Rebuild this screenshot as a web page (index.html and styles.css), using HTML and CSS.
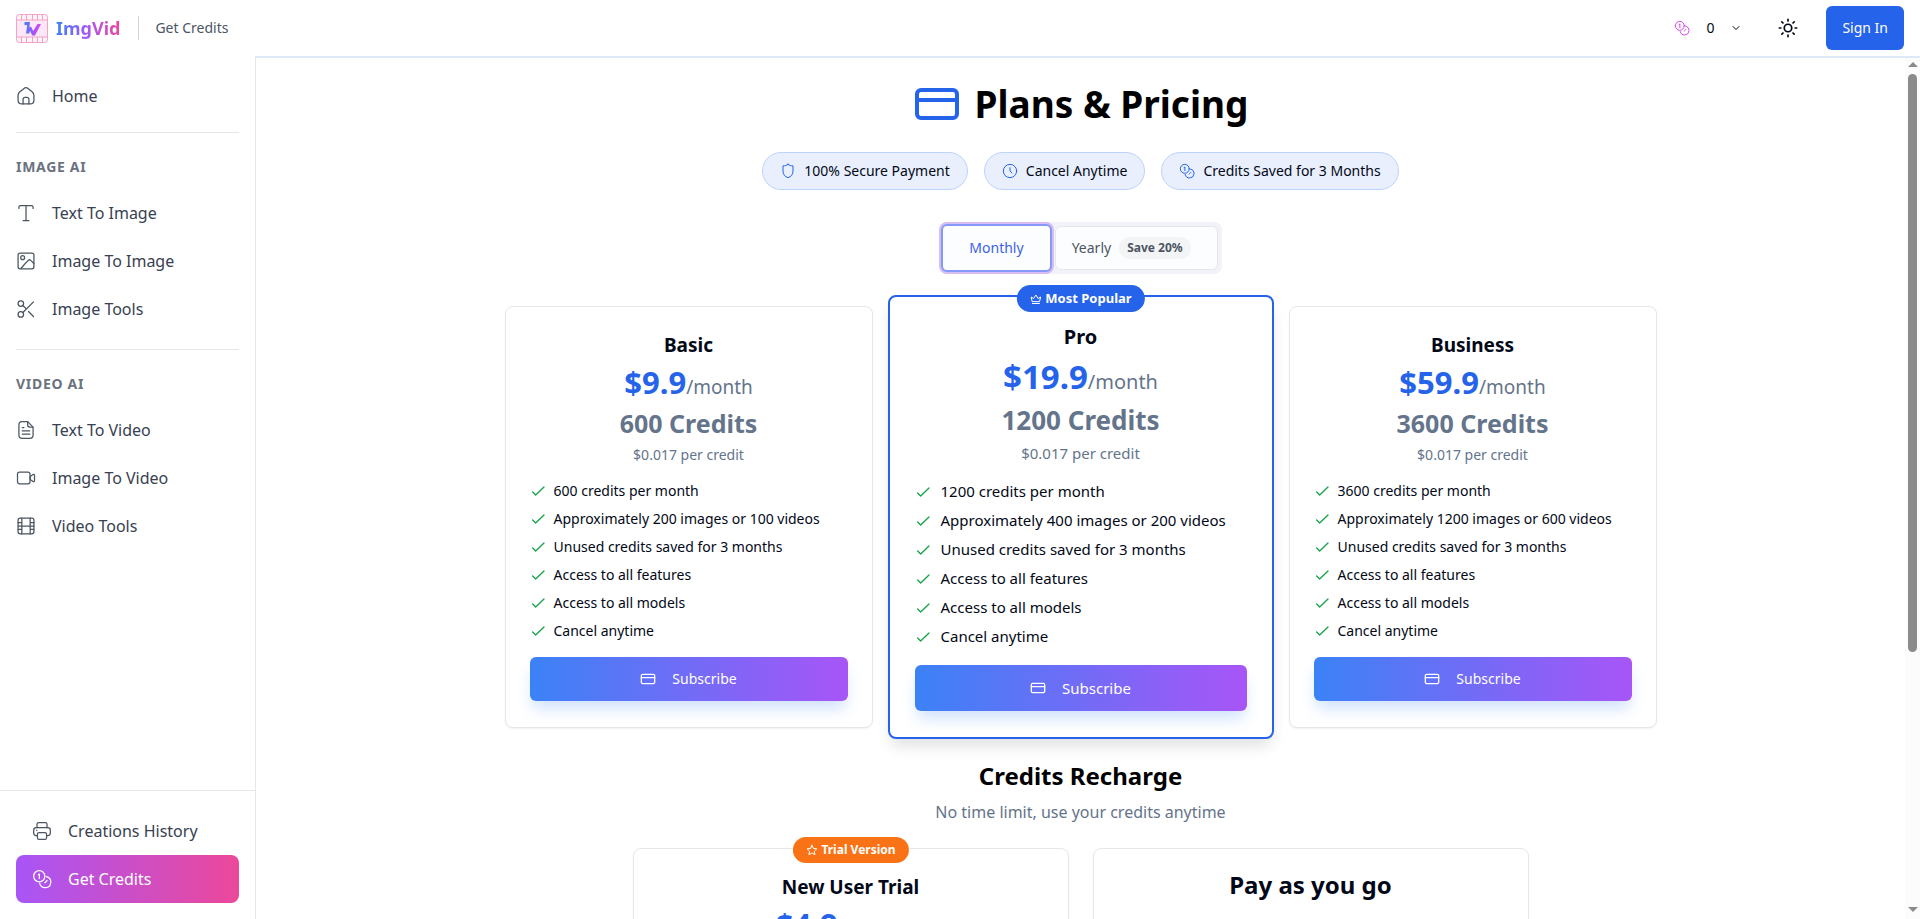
FILE: index.html
```html
<!DOCTYPE html>
<html lang="en">
<head>
<meta charset="utf-8">
<meta name="viewport" content="width=device-width, initial-scale=1">
<title>ImgVid - Plans &amp; Pricing</title>
<link rel="stylesheet" href="styles.css">
</head>
<body>
<svg class="sprite" aria-hidden="true">
  <defs>
    <linearGradient id="brand" x1="0" y1="0" x2="1" y2="0"><stop offset="0" stop-color="#3b82f6"/><stop offset=".55" stop-color="#a855f7"/><stop offset="1" stop-color="#d946ef"/></linearGradient>
  </defs>
  <symbol id="home" viewBox="0 0 24 24"><path d="M2.5 11.2c0-1.9.7-3 2.2-4.2l4.2-3.500c1.300-1.100 2-1.600 3.100-1.600s1.800.5 3.100 1.600L19.300 7c1.500 1.200 2.200 2.300 2.200 4.200V17c0 3.300-1.200 4.500-4.500 4.500H7c-3.300 0-4.500-1.200-4.500-4.500z"/><path d="M8.500 21.500V16c0-1.900.6-2.500 2.500-2.500h2c1.900 0 2.500.6 2.500 2.500v5.500"/></symbol>
  <symbol id="text" viewBox="0 0 24 24"><path d="M12 3v18M8.500 21h7M3.500 6.500V5c0-1.500.5-2 2-2h13c1.500 0 2 .5 2 2v1.500"/></symbol>
  <symbol id="image" viewBox="0 0 24 24"><rect x="2.500" y="2.500" width="19" height="19" rx="2.500"/><circle cx="8" cy="8" r="2.300"/><path d="M6 21c3-4 6-7.500 9-10 1-.8 1.800-.6 2.600.2L21.500 15"/></symbol>
  <symbol id="scissors" viewBox="0 0 24 24"><circle cx="5.800" cy="5.500" r="3.300"/><circle cx="5.800" cy="18.500" r="3.300"/><path d="M8.300 16.200 21 3.500M8.300 7.800l4 4M15 15l6 6"/></symbol>
  <symbol id="file" viewBox="0 0 24 24"><path d="M7 2h7l6.500 6.500V18c0 3-1 4-4 4H7.500c-3 0-4-1-4-4V6c0-3 1-4 3.500-4z"/><path d="M14 2.300V6c0 1.900.6 2.500 2.500 2.500h3.700M7.500 9h2M7.500 13h9M7.500 17h9"/></symbol>
  <symbol id="video" viewBox="0 0 24 24"><rect x="1.800" y="5" width="15" height="14" rx="2.500"/><path d="M17 10.200l3-2c1.500-1 2.200-.7 2.200 1v5.600c0 1.700-.7 2-2.200 1l-3-2z"/></symbol>
  <symbol id="film" viewBox="0 0 24 24"><rect x="2.500" y="2.500" width="19" height="19" rx="2.500"/><path d="M7 2.500v19M17 2.500v19M7 12h10M2.500 8H7M2.500 12H7M2.500 16H7M17 8h4.500M17 12h4.500M17 16h4.500"/></symbol>
  <symbol id="printer" viewBox="0 0 24 24"><path d="M6.500 17.500H5c-2 0-3-1-3-3V11c0-2 1-3 3-3h14c2 0 3 1 3 3v3.500c0 2-1 3-3 3h-1.500"/><path d="M6 8V4c0-1.500.5-2 2-2h8c1.500 0 2 .5 2 2v4"/><path d="M8.500 14h7c1.500 0 2 .5 2 2v4c0 1.500-.5 2-2 2h-7c-1.500 0-2-.5-2-2v-4c0-1.500.5-2 2-2zM5.500 11.200h.3"/></symbol>
  <symbol id="coins" viewBox="0 0 24 24"><circle cx="8.700" cy="8.700" r="6.700"/><path d="M17.200 9.200A6.700 6.700 0 1 1 9.300 17.300"/><path d="M7.500 6.800l1.300-.8v5.500M15.300 16.500c1.700-1 1.700-1.700 2.700-2.700"/></symbol>
  <symbol id="card" viewBox="0 0 24 24"><rect x="2" y="5" width="20" height="14" rx="2"/><path d="M2 10h20"/></symbol>
  <symbol id="shield" viewBox="0 0 24 24"><path d="M12 2c2 1.800 4.800 2.300 7.500 2.300V12c0 5.500-3 8.500-7.500 10-4.500-1.500-7.500-4.500-7.500-10V4.300C7.200 4.300 10 3.800 12 2z"/></symbol>
  <symbol id="clock" viewBox="0 0 24 24"><circle cx="12" cy="12" r="10"/><path d="M12 7v5l3 3"/></symbol>
  <symbol id="check" viewBox="0 0 24 24"><path d="M4 13.500l4.500 4.500L21 6"/></symbol>
  <symbol id="crown" viewBox="0 0 24 24"><path d="M4.500 16.500 2.500 8l5 3L12 4l4.500 7 5-3-2 8.500zM5 21h14"/></symbol>
  <symbol id="star" viewBox="0 0 24 24"><path d="M12 2.500l3 6.300 6.700.9-4.900 4.700 1.200 6.900-6-3.300-6 3.300 1.200-6.900L2.300 9.700 9 8.800z"/></symbol>
  <symbol id="sun" viewBox="0 0 24 24"><circle cx="12" cy="12" r="4.500"/><path d="M12 1.500v2M12 20.500v2M1.500 12h2M20.500 12h2M4.600 4.600l1.400 1.400M18 18l1.400 1.400M4.600 19.400l1.400-1.400M18 6l1.400-1.400"/></symbol>
  <symbol id="chevron" viewBox="0 0 24 24"><path d="M6 9l6 6 6-6"/></symbol>
</svg>

<div class="app">
  <header class="topbar">
    <a class="brand" href="#">
      <svg class="logo" viewBox="0 0 32 29" aria-hidden="true">
        <rect x=".5" y=".5" width="31" height="28" rx="3" fill="#fdf2f8" stroke="#f0a3c4"/>
        <rect x="1" y="6" width="30" height="17" fill="#fce7f8"/>
        <path d="M1 6h30M1 23h30M5.500 1v5M10.500 1v5M16.500 1v5M21.500 1v5M26.500 1v5M5.500 23v5M10.500 23v5M16.500 23v5M21.500 23v5M26.500 23v5" stroke="#f0a3c4" fill="none"/>
        <path d="M8.500 8h5.500l-.6 5.500 1.600-1 2.200 4.500L21.500 10H25l-6 11.500h-2.800L14 16.800l-.7 2.700H10l1.200-8.200L8.500 11z" fill="url(#brand)"/>
      </svg>
      <span class="brand-name">ImgVid</span>
    </a>
    <span class="crumb">Get Credits</span>
    <div class="tools">
      <button class="balance" type="button" aria-label="Credit balance"><svg class="icon icon-16 coin"><use href="#coins"/></svg><span>0</span><svg class="icon icon-12 bold"><use href="#chevron"/></svg></button>
      <button class="theme" type="button" aria-label="Toggle theme"><svg class="icon icon-20 bold"><use href="#sun"/></svg></button>
      <button class="signin" type="button">Sign In</button>
    </div>
  </header>

  <aside class="sidebar">
    <nav class="nav">
      <a class="nav-item" href="#"><svg class="icon icon-20"><use href="#home"/></svg>Home</a>
      <hr class="rule">
      <h2 class="nav-title">IMAGE AI</h2>
      <a class="nav-item" href="#"><svg class="icon icon-20"><use href="#text"/></svg>Text To Image</a>
      <a class="nav-item" href="#"><svg class="icon icon-20"><use href="#image"/></svg>Image To Image</a>
      <a class="nav-item" href="#"><svg class="icon icon-20"><use href="#scissors"/></svg>Image Tools</a>
      <hr class="rule rule-wide">
      <h2 class="nav-title">VIDEO AI</h2>
      <a class="nav-item" href="#"><svg class="icon icon-20"><use href="#file"/></svg>Text To Video</a>
      <a class="nav-item" href="#"><svg class="icon icon-20"><use href="#video"/></svg>Image To Video</a>
      <a class="nav-item" href="#"><svg class="icon icon-20"><use href="#film"/></svg>Video Tools</a>
    </nav>
    <div class="nav-foot">
      <a class="nav-item inset" href="#"><svg class="icon icon-20"><use href="#printer"/></svg>Creations History</a>
      <a class="nav-item inset active" href="#"><svg class="icon icon-20"><use href="#coins"/></svg>Get Credits</a>
    </div>
  </aside>

  <div class="viewport">
    <main class="content">
      <h1 class="title"><svg class="icon icon-48 bold"><use href="#card"/></svg>Plans &amp; Pricing</h1>
      <ul class="pills">
        <li class="pill"><svg class="icon icon-16"><use href="#shield"/></svg>100% Secure Payment</li>
        <li class="pill"><svg class="icon icon-16"><use href="#clock"/></svg>Cancel Anytime</li>
        <li class="pill"><svg class="icon icon-16"><use href="#coins"/></svg>Credits Saved for 3 Months</li>
      </ul>
      <div class="period">
        <button class="period-btn selected" type="button">Monthly</button>
        <button class="period-btn" type="button">Yearly <span class="save">Save 20%</span></button>
      </div>

      <section class="plans">
        <article class="plan">
          <h3 class="plan-name">Basic</h3>
          <p class="price"><strong>$9.9</strong>/month</p>
          <p class="credits">600 Credits</p>
          <p class="unit">$0.017 per credit</p>
          <ul class="features">
            <li><svg class="icon"><use href="#check"/></svg>600 credits per month</li>
            <li><svg class="icon"><use href="#check"/></svg>Approximately 200 images or 100 videos</li>
            <li><svg class="icon"><use href="#check"/></svg>Unused credits saved for 3 months</li>
            <li><svg class="icon"><use href="#check"/></svg>Access to all features</li>
            <li><svg class="icon"><use href="#check"/></svg>Access to all models</li>
            <li><svg class="icon"><use href="#check"/></svg>Cancel anytime</li>
          </ul>
          <button class="subscribe" type="button"><svg class="icon icon-16 bold"><use href="#card"/></svg>Subscribe</button>
        </article>

        <article class="plan popular">
          <span class="badge"><svg class="icon icon-12 bold"><use href="#crown"/></svg>Most Popular</span>
          <h3 class="plan-name">Pro</h3>
          <p class="price"><strong>$19.9</strong>/month</p>
          <p class="credits">1200 Credits</p>
          <p class="unit">$0.017 per credit</p>
          <ul class="features">
            <li><svg class="icon"><use href="#check"/></svg>1200 credits per month</li>
            <li><svg class="icon"><use href="#check"/></svg>Approximately 400 images or 200 videos</li>
            <li><svg class="icon"><use href="#check"/></svg>Unused credits saved for 3 months</li>
            <li><svg class="icon"><use href="#check"/></svg>Access to all features</li>
            <li><svg class="icon"><use href="#check"/></svg>Access to all models</li>
            <li><svg class="icon"><use href="#check"/></svg>Cancel anytime</li>
          </ul>
          <button class="subscribe" type="button"><svg class="icon icon-16 bold"><use href="#card"/></svg>Subscribe</button>
        </article>

        <article class="plan">
          <h3 class="plan-name">Business</h3>
          <p class="price"><strong>$59.9</strong>/month</p>
          <p class="credits">3600 Credits</p>
          <p class="unit">$0.017 per credit</p>
          <ul class="features">
            <li><svg class="icon"><use href="#check"/></svg>3600 credits per month</li>
            <li><svg class="icon"><use href="#check"/></svg>Approximately 1200 images or 600 videos</li>
            <li><svg class="icon"><use href="#check"/></svg>Unused credits saved for 3 months</li>
            <li><svg class="icon"><use href="#check"/></svg>Access to all features</li>
            <li><svg class="icon"><use href="#check"/></svg>Access to all models</li>
            <li><svg class="icon"><use href="#check"/></svg>Cancel anytime</li>
          </ul>
          <button class="subscribe" type="button"><svg class="icon icon-16 bold"><use href="#card"/></svg>Subscribe</button>
        </article>
      </section>

      <h2 class="recharge-title">Credits Recharge</h2>
      <p class="recharge-note">No time limit, use your credits anytime</p>
      <section class="packs">
        <article class="plan">
          <span class="badge trial"><svg class="icon icon-12 bold"><use href="#star"/></svg>Trial Version</span>
          <h3 class="plan-name">New User Trial</h3>
          <p class="price"><strong>$4.9</strong>/one-time</p>
        </article>
        <article class="plan">
          <h3 class="pack-name">Pay as you go</h3>
        </article>
      </section>
    </main>
    <div class="scrollbar" aria-hidden="true">
      <span class="arrow up"></span>
      <span class="track"><span class="thumb"></span></span>
      <span class="arrow down"></span>
    </div>
  </div>
</div>
</body>
</html>
```
FILE: styles.css
```css
* { box-sizing: border-box; }
body {
  margin: 0;
  background: #fff;
  color: #020817;
  font-family: "Segoe UI", "Noto Sans", "Open Sans", sans-serif;
  font-size: 14px;
  line-height: 20px;
}
h1, h2, h3, p, ul { margin: 0; padding: 0; }
ul { list-style: none; }
a { color: inherit; text-decoration: none; }
button { font: inherit; color: inherit; border: 0; background: none; padding: 0; cursor: pointer; }

.sprite { position: absolute; width: 0; height: 0; }
.icon {
  flex: none;
  width: 16px;
  height: 16px;
  fill: none;
  stroke: currentColor;
  stroke-width: 1.5;
  stroke-linecap: round;
  stroke-linejoin: round;
}
.icon-12 { width: 12px; height: 12px; }
.icon-16 { width: 16px; height: 16px; }
.icon-20 { width: 20px; height: 20px; }
.icon-48 { width: 48px; height: 48px; }
.bold { stroke-width: 2; }

.app {
  display: grid;
  grid-template: 56px minmax(0, 1fr) / 256px minmax(0, 1fr);
  height: 100vh;
  overflow: hidden;
}

/* Top bar */
.topbar {
  grid-column: 1 / -1;
  display: flex;
  align-items: center;
  padding: 0 16px;
}
.brand { display: flex; align-items: center; gap: 8px; }
.logo { width: 32px; height: 29px; }
.brand-name {
  font-size: 18px;
  line-height: 28px;
  font-weight: 700;
  background: linear-gradient(90deg, #3b82f6, #a855f7, #ec4899);
  -webkit-background-clip: text;
  background-clip: text;
  color: transparent;
}
.crumb {
  margin-left: 18px;
  padding-left: 16px;
  border-left: 1px solid #d1d5db;
  line-height: 24px;
  color: #4b5563;
}
.tools { display: flex; align-items: center; margin-left: auto; }
.balance { display: flex; align-items: center; gap: 16px; }
.balance .coin { color: #d946ef; }
.theme { display: flex; margin: 0 28px 0 36px; }
.signin {
  height: 44px;
  padding: 0 16px;
  border-radius: 6px;
  background: #2563eb;
  color: #fff;
}

/* Sidebar */
.sidebar {
  display: flex;
  flex-direction: column;
  border-right: 1px solid #e5e7eb;
}
.nav { flex: 1; padding: 16px; }
.nav-item {
  display: flex;
  align-items: center;
  gap: 16px;
  height: 48px;
  font-size: 16px;
  color: #374151;
}
.nav-item .icon { color: #4b5563; }
.rule { margin: 12px 0 0; border: 0; border-top: 1px solid #e5e7eb; }
.rule-wide { margin-top: 16px; }
.nav-title {
  padding: 24px 0 12px;
  font-size: 14px;
  font-weight: 700;
  letter-spacing: 0.05em;
  color: #6b7280;
}
.nav-foot { padding: 16px; border-top: 1px solid #e5e7eb; }
.inset { padding: 0 16px; }
.nav-item.active {
  border-radius: 8px;
  background: linear-gradient(90deg, #a855f7, #ec4899);
  color: #fff;
}
.active .icon { color: #fff; }

/* Scrolling area */
.viewport {
  display: flex;
  min-height: 0;
  overflow: hidden;
  border-top: 2px solid #dfe8f7;
}
.content {
  flex: 1;
  display: flex;
  flex-direction: column;
  align-items: center;
  padding: 22px 24px;
}
.scrollbar {
  display: flex;
  flex-direction: column;
  align-items: center;
  width: 15px;
  padding: 4px 0 7px;
  background: #fcfcfc;
}
.arrow { border: 5px solid transparent; border-top-width: 0; border-bottom: 5px solid #8b8b8b; }
.arrow.down { border-bottom-width: 0; border-top: 5px solid #8b8b8b; }
.track { flex: 1; width: 9px; padding: 7px 0; }
.thumb { display: block; height: 70%; border-radius: 5px; background: #8b8b8b; }

.title {
  display: flex;
  align-items: center;
  gap: 14px;
  font-size: 37px;
  line-height: 48px;
  font-weight: 700;
  color: #000;
}
.title .icon { color: #2563eb; }

.pills { display: flex; gap: 16px; margin-top: 24px; }
.pill {
  display: flex;
  align-items: center;
  gap: 8px;
  padding: 8px 17px;
  border: 1px solid #bed3fb;
  border-radius: 20px;
  background: #e9effd;
}
.pill .icon { color: #2563eb; }

.period {
  display: flex;
  align-items: center;
  gap: 3px;
  margin-top: 32px;
  padding: 2px 4px 2px 2px;
  border-radius: 8px;
  background: #f1f3f9;
}
.period-btn {
  display: flex;
  align-items: center;
  gap: 8px;
  height: 44px;
  padding: 0 26px 0 16px;
  border: 1px solid #e5e7eb;
  border-radius: 6px;
  background: #fcfdff;
  color: #4b5563;
}
.period-btn.selected {
  height: 48px;
  padding: 0 26px;
  border: 2px solid #8599fb;
  box-shadow: 0 0 0 2px #d7bdf2;
  color: #3b63e6;
}
.save {
  padding: 1px 8px;
  border-radius: 12px;
  background: #f3f4f6;
  font-size: 12px;
  font-weight: 700;
}

/* Plans */
.plans {
  display: grid;
  grid-template-columns: 368fr 386fr 368fr;
  gap: 15px;
  width: 100%;
  max-width: 1152px;
  margin-top: 32px;
}
.plan {
  position: relative;
  display: flex;
  flex-direction: column;
  align-items: center;
  padding: 24px 24px 26px;
  border: 1px solid #e5e7eb;
  border-radius: 8px;
  background: #fff;
  box-shadow: 0 1px 2px rgba(0, 0, 0, 0.05);
}
.plan-name { font-size: 19px; line-height: 28px; font-weight: 700; }
.price { margin-top: 3px; font-size: 19px; line-height: 40px; color: #64748b; }
.price strong { font-size: 31px; font-weight: 700; color: #2563eb; }
.credits { font-size: 25px; line-height: 32px; font-weight: 700; color: #64748b; }
.unit { margin-top: 6px; color: #64748b; }
.features { display: grid; gap: 8px; width: 100%; margin-top: 16px; }
.features li { display: flex; align-items: center; gap: 8px; }
.features .icon { color: #16a34a; stroke-width: 2; }
.subscribe {
  display: flex;
  align-items: center;
  justify-content: center;
  gap: 16px;
  width: 100%;
  height: 44px;
  margin-top: 16px;
  border-radius: 6px;
  background: linear-gradient(90deg, #3b82f6, #a855f7);
  box-shadow: 0 10px 15px -3px rgba(59, 130, 246, 0.25);
  color: #fff;
}

.popular {
  margin: -11px 0;
  padding: 26px 25px 22px;
  border: 2px solid #2563eb;
  box-shadow: 0 10px 15px -3px rgba(0, 0, 0, 0.12);
  font-size: 15px;
  line-height: 21px;
}
.popular .plan-name { font-size: 20px; }
.popular .price { margin-top: 6px; font-size: 20px; }
.popular .price strong { font-size: 33px; }
.popular .credits { margin-top: 2px; font-size: 26px; }
.popular .unit { margin-top: 7px; }
.popular .features { margin-top: 17px; }
.popular .features li { gap: 10px; }
.popular .subscribe { height: 46px; margin-top: 18px; }

.badge {
  position: absolute;
  top: -12px;
  left: 50%;
  transform: translateX(-50%);
  display: flex;
  align-items: center;
  gap: 4px;
  padding: 3px 13px;
  border-radius: 14px;
  background: #2563eb;
  color: #fff;
  font-size: 13px;
  line-height: 21px;
  font-weight: 700;
  white-space: nowrap;
}
.badge.trial { background: #f97316; font-size: 12px; line-height: 20px; }

/* Credit packs */
.recharge-title { margin-top: 32px; font-size: 24px; line-height: 32px; font-weight: 700; color: #000; }
.recharge-note { margin-top: 8px; font-size: 16px; line-height: 24px; color: #64748b; }
.packs {
  display: grid;
  grid-template-columns: 1fr 1fr;
  gap: 24px;
  width: 100%;
  max-width: 896px;
  margin-top: 24px;
}
.pack-name { font-size: 24px; line-height: 24px; font-weight: 700; }
```
